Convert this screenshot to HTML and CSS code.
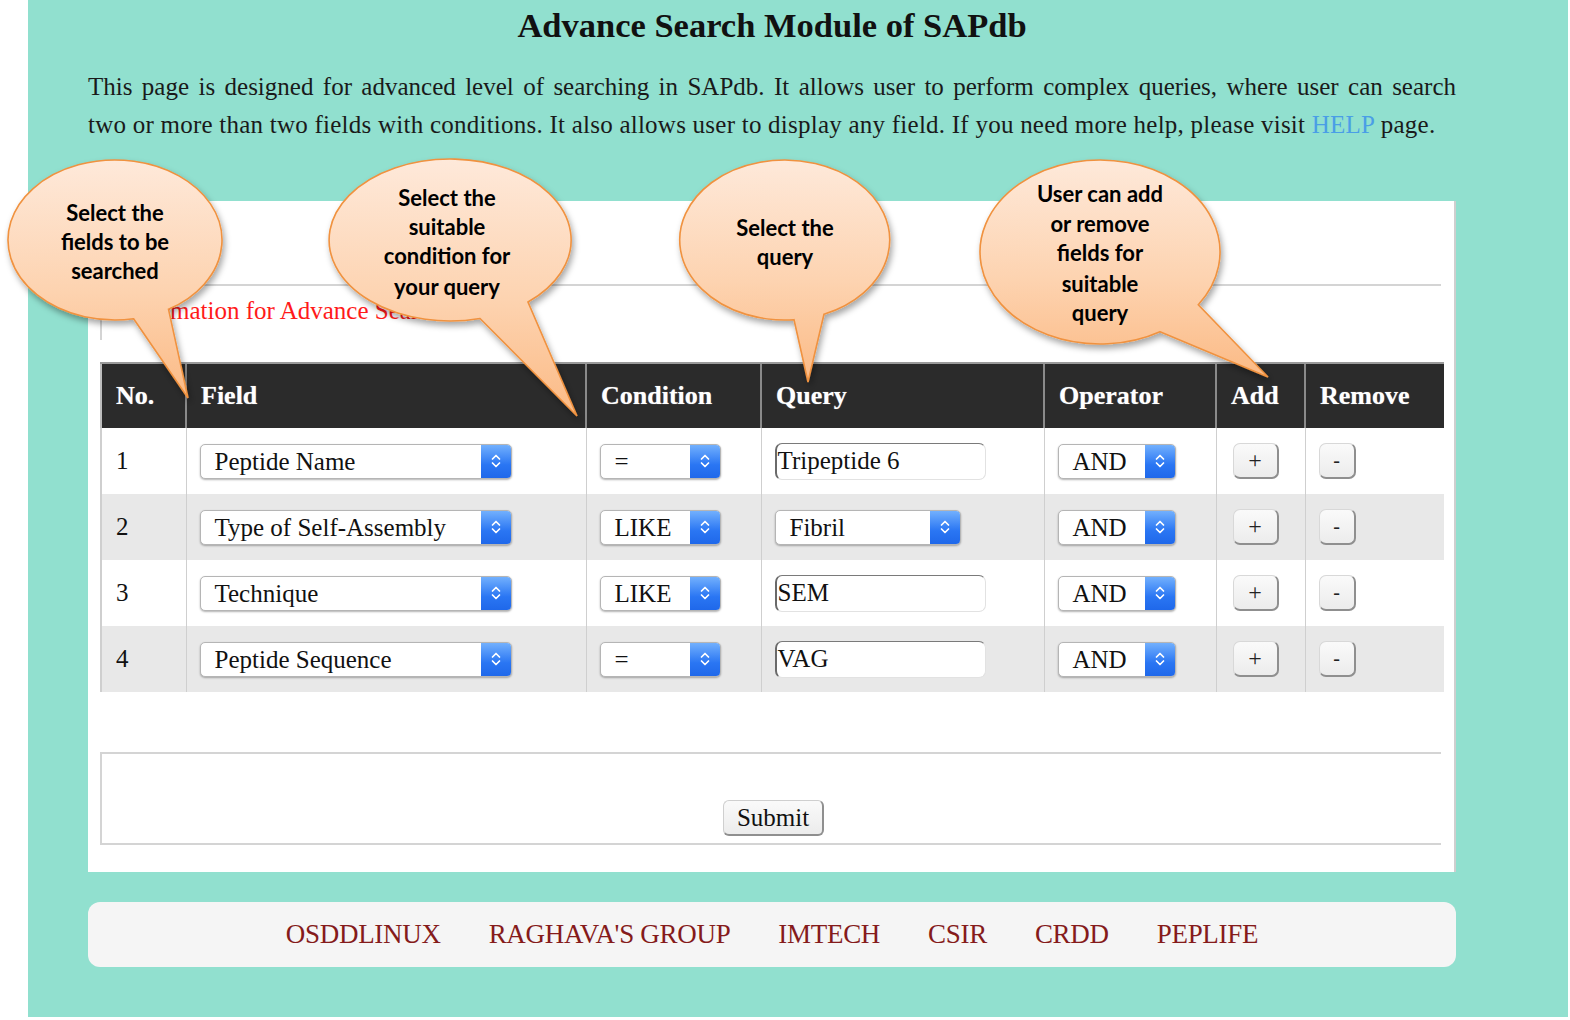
FILE: index.html
```html
<!DOCTYPE html>
<html>
<head>
<meta charset="utf-8">
<title>Advance Search Module of SAPdb</title>
<link rel="stylesheet" href="styles.css">
</head>
<body>
<div class="page">
  <div class="content">
    <h1 class="title">Advance Search Module of SAPdb</h1>
    <div class="intro">
      <div class="line1">This page is designed for advanced level of searching in SAPdb. It allows user to perform complex queries, where user can search</div>
      <div class="line2">two or more than two fields with conditions. It also allows user to display any field. If you need more help, please visit <a class="help" href="#">HELP</a> page.</div>
    </div>

    <div class="panel">
      <div class="legend-box"><span class="legend">Information for Advance Search</span></div>
      <table class="grid">
        <thead>
          <tr>
            <th class="c-no">No.</th>
            <th class="c-field">Field</th>
            <th class="c-cond">Condition</th>
            <th class="c-query">Query</th>
            <th class="c-op">Operator</th>
            <th class="c-add">Add</th>
            <th class="c-rem">Remove</th>
          </tr>
        </thead>
        <tbody>
          <tr>
            <td class="num">1</td>
            <td><div class="sel w-field"><span class="val">Peptide Name</span><i class="arr"><svg viewBox="0 0 12 22" width="12" height="22"><path d="M2.5 9 L6 5.5 L9.5 9 M2.5 13 L6 16.5 L9.5 13"/></svg></i></div></td>
            <td><div class="sel w-cond"><span class="val">=</span><i class="arr"><svg viewBox="0 0 12 22" width="12" height="22"><path d="M2.5 9 L6 5.5 L9.5 9 M2.5 13 L6 16.5 L9.5 13"/></svg></i></div></td>
            <td><div class="inp">Tripeptide 6</div></td>
            <td><div class="sel w-op"><span class="val">AND</span><i class="arr"><svg viewBox="0 0 12 22" width="12" height="22"><path d="M2.5 9 L6 5.5 L9.5 9 M2.5 13 L6 16.5 L9.5 13"/></svg></i></div></td>
            <td><div class="btn add">+</div></td>
            <td><div class="btn rem">-</div></td>
          </tr>
          <tr class="alt">
            <td class="num">2</td>
            <td><div class="sel w-field"><span class="val">Type of Self-Assembly</span><i class="arr"><svg viewBox="0 0 12 22" width="12" height="22"><path d="M2.5 9 L6 5.5 L9.5 9 M2.5 13 L6 16.5 L9.5 13"/></svg></i></div></td>
            <td><div class="sel w-cond"><span class="val">LIKE</span><i class="arr"><svg viewBox="0 0 12 22" width="12" height="22"><path d="M2.5 9 L6 5.5 L9.5 9 M2.5 13 L6 16.5 L9.5 13"/></svg></i></div></td>
            <td><div class="sel w-query"><span class="val">Fibril</span><i class="arr"><svg viewBox="0 0 12 22" width="12" height="22"><path d="M2.5 9 L6 5.5 L9.5 9 M2.5 13 L6 16.5 L9.5 13"/></svg></i></div></td>
            <td><div class="sel w-op"><span class="val">AND</span><i class="arr"><svg viewBox="0 0 12 22" width="12" height="22"><path d="M2.5 9 L6 5.5 L9.5 9 M2.5 13 L6 16.5 L9.5 13"/></svg></i></div></td>
            <td><div class="btn add">+</div></td>
            <td><div class="btn rem">-</div></td>
          </tr>
          <tr>
            <td class="num">3</td>
            <td><div class="sel w-field"><span class="val">Technique</span><i class="arr"><svg viewBox="0 0 12 22" width="12" height="22"><path d="M2.5 9 L6 5.5 L9.5 9 M2.5 13 L6 16.5 L9.5 13"/></svg></i></div></td>
            <td><div class="sel w-cond"><span class="val">LIKE</span><i class="arr"><svg viewBox="0 0 12 22" width="12" height="22"><path d="M2.5 9 L6 5.5 L9.5 9 M2.5 13 L6 16.5 L9.5 13"/></svg></i></div></td>
            <td><div class="inp">SEM</div></td>
            <td><div class="sel w-op"><span class="val">AND</span><i class="arr"><svg viewBox="0 0 12 22" width="12" height="22"><path d="M2.5 9 L6 5.5 L9.5 9 M2.5 13 L6 16.5 L9.5 13"/></svg></i></div></td>
            <td><div class="btn add">+</div></td>
            <td><div class="btn rem">-</div></td>
          </tr>
          <tr class="alt">
            <td class="num">4</td>
            <td><div class="sel w-field"><span class="val">Peptide Sequence</span><i class="arr"><svg viewBox="0 0 12 22" width="12" height="22"><path d="M2.5 9 L6 5.5 L9.5 9 M2.5 13 L6 16.5 L9.5 13"/></svg></i></div></td>
            <td><div class="sel w-cond"><span class="val">=</span><i class="arr"><svg viewBox="0 0 12 22" width="12" height="22"><path d="M2.5 9 L6 5.5 L9.5 9 M2.5 13 L6 16.5 L9.5 13"/></svg></i></div></td>
            <td><div class="inp">VAG</div></td>
            <td><div class="sel w-op"><span class="val">AND</span><i class="arr"><svg viewBox="0 0 12 22" width="12" height="22"><path d="M2.5 9 L6 5.5 L9.5 9 M2.5 13 L6 16.5 L9.5 13"/></svg></i></div></td>
            <td><div class="btn add">+</div></td>
            <td><div class="btn rem">-</div></td>
          </tr>
        </tbody>
      </table>
      <div class="submit-box"><button class="submit" type="button">Submit</button></div>
    </div>

    <div class="footer">
      <a href="#">OSDDLINUX</a>
      <a href="#">RAGHAVA'S GROUP</a>
      <a href="#">IMTECH</a>
      <a href="#">CSIR</a>
      <a href="#">CRDD</a>
      <a href="#">PEPLIFE</a>
    </div>
  </div>
</div>

<svg class="callouts" width="1570" height="1020" viewBox="0 0 1570 1020">
  <defs>
    <linearGradient id="peach" x1="0" y1="0" x2="0" y2="1">
      <stop offset="0" stop-color="#fee9da"/>
      <stop offset="0.55" stop-color="#fdd3b0"/>
      <stop offset="1" stop-color="#fbba85"/>
    </linearGradient>
    <filter id="shadow" x="-20%" y="-20%" width="140%" height="150%">
      <feDropShadow dx="2" dy="4" stdDeviation="3" flood-color="#000" flood-opacity="0.35"/>
    </filter>
  </defs>
  <g class="bubble">
    <path d="M133.6 318.8 L188 398 L168.5 309.3 A107 80 0 1 0 133.6 318.8 Z"/>
    <text x="115" y="221">Select the</text>
    <text x="115" y="250">fields to be</text>
    <text x="115" y="279">searched</text>
  </g>
  <g class="bubble">
    <path d="M480 318.5 L577 416 L528 302 A121 81 0 1 0 480 318.5 Z"/>
    <text x="447" y="206">Select the</text>
    <text x="447" y="235">suitable</text>
    <text x="447" y="264">condition for</text>
    <text x="447" y="295">your query</text>
  </g>
  <g class="bubble">
    <path d="M794 319.7 L808 382 L824 314.2 A105 80 0 1 0 794 319.7 Z"/>
    <text x="785" y="236">Select the</text>
    <text x="785" y="265">query</text>
  </g>
  <g class="bubble">
    <path d="M1160 331.7 L1268 377 L1198.3 304.8 A120 92 0 1 0 1160 331.7 Z"/>
    <text x="1100" y="202">User can add</text>
    <text x="1100" y="232">or remove</text>
    <text x="1100" y="261">fields for</text>
    <text x="1100" y="292">suitable</text>
    <text x="1100" y="321">query</text>
  </g>
</svg>
</body>
</html>
```

FILE: styles.css
```css
html, body {
  margin: 0;
  padding: 0;
  background: #ffffff;
}

body {
  position: relative;
  width: 1570px;
  height: 1020px;
  overflow: hidden;
  font-family: "Liberation Serif", "Times New Roman", serif;
  color: #111;
}

.page {
  margin-left: 28px;
  width: 1540px;
  height: 1017px;
  background: #91e0cf;
  padding-top: 5px;
  box-sizing: border-box;
}

.content {
  margin-left: 60px;
  width: 1368px;
}

.title {
  margin: 0;
  text-align: center;
  font-size: 34.5px;
  line-height: 40px;
  font-weight: bold;
  color: #111;
}

.intro {
  margin-top: 23px;
  font-size: 25px;
  line-height: 38px;
  color: #1a1a1a;
}

.line1 {
  text-align: justify;
  text-align-last: justify;
  white-space: nowrap;
}

.line2 {
  white-space: nowrap;
  letter-spacing: 0.24px;
}

.help {
  color: #4a9ee6;
  text-decoration: none;
}

.panel {
  margin-top: 57px;
  background: #fff;
  border-right: 2px solid #cfcfcf;
  padding: 83px 13px 27px 12px;
  height: 671px;
  box-sizing: border-box;
}

.legend-box {
  height: 56px;
  border-top: 2px solid #d4d4d4;
  border-left: 2px solid #d4d4d4;
  box-sizing: border-box;
  padding-left: 18px;
  padding-top: 8px;
}

.legend {
  color: #ff1a1a;
  font-size: 25px;
  line-height: 34px;
}

.grid {
  margin-top: 22px;
  width: 1343px;
  border-collapse: collapse;
  table-layout: fixed;
  font-size: 25px;
}

.grid th {
  height: 65px;
  background: #2b2b2b;
  color: #fff;
  font-weight: bold;
  font-size: 26px;
  text-align: left;
  padding: 0 0 0 14px;
  border-left: 2px solid #8a8a8a;
  border-top: 2px solid #9a9a9a;
  text-shadow: 0 0 1px rgba(255,255,255,0.6);
  box-sizing: border-box;
}

.grid th:first-child {
  border-left: 2px solid #bdbdbd;
}

.c-no { width: 85px; }
.c-field { width: 400px; }
.c-cond { width: 175px; }
.c-query { width: 283px; }
.c-op { width: 172px; }
.c-add { width: 89px; }
.c-rem { width: 139px; }

.grid td {
  height: 66px;
  padding: 0 0 0 13px;
  border-left: 1px solid #cfcfcf;
  vertical-align: middle;
  box-sizing: border-box;
}

.grid td:first-child {
  border-left: 2px solid #cfcfcf;
}

.grid tr.alt td {
  background: #e8e8e8;
}

.grid td.num {
  padding-left: 14px;
  font-size: 25px;
}

.sel {
  display: flex;
  height: 35px;
  border: 1px solid #b5b5b5;
  border-radius: 5px;
  background: #fff;
  box-shadow: 0 1px 2px rgba(0,0,0,0.3);
  overflow: hidden;
  box-sizing: border-box;
}

.sel .val {
  flex: 1;
  padding-left: 14px;
  font-size: 25px;
  line-height: 33px;
  white-space: nowrap;
  overflow: hidden;
  color: #111;
}

.sel .arr {
  width: 30px;
  background: linear-gradient(#72b0fd, #2a76f3 60%, #1f68ea);
  display: flex;
  align-items: center;
  justify-content: center;
}

.sel .arr path {
  fill: none;
  stroke: #fff;
  stroke-width: 1.7;
  stroke-linecap: round;
  stroke-linejoin: round;
}

.w-field { width: 312px; }
.w-cond { width: 121px; }
.w-query { width: 186px; }
.w-op { width: 118px; }

.inp {
  width: 211px;
  height: 37px;
  box-sizing: border-box;
  border: 1px solid #e2e2e2;
  border-top-color: #7a7a7a;
  border-left: 2px solid #6a6a6a;
  border-radius: 7px;
  background: #fff;
  font-size: 25px;
  line-height: 34px;
  padding-left: 1px;
  color: #111;
}

.btn {
  height: 36px;
  box-sizing: border-box;
  background: linear-gradient(#fafafa, #ececec);
  border: 1px solid #d8d8d8;
  border-right: 2px solid #8f8f8f;
  border-bottom: 2px solid #8f8f8f;
  border-radius: 7px;
  text-align: center;
  font-size: 24px;
  line-height: 32px;
  color: #222;
}

.btn.add {
  width: 46px;
  margin-left: 3px;
}

.btn.rem {
  width: 37px;
  font-size: 20px;
}

.submit-box {
  margin-top: 60px;
  height: 93px;
  border-top: 2px solid #d4d4d4;
  border-left: 2px solid #d4d4d4;
  border-bottom: 2px solid #d4d4d4;
  box-sizing: border-box;
  text-align: center;
  padding-top: 46px;
}

.submit {
  height: 36px;
  padding: 0 13px;
  margin-left: 4px;
  font-family: "Liberation Serif", "Times New Roman", serif;
  font-size: 25px;
  line-height: 32px;
  background: linear-gradient(#fafafa, #ececec);
  border: 1px solid #cfcfcf;
  border-right: 2px solid #8f8f8f;
  border-bottom: 2px solid #8f8f8f;
  border-radius: 6px;
  color: #111;
}

.footer {
  margin-top: 30px;
  height: 65px;
  background: #f5f5f5;
  border-radius: 12px;
  display: flex;
  align-items: center;
  justify-content: center;
  gap: 48px;
  box-sizing: border-box;
}

.footer a {
  color: #851b1b;
  text-decoration: none;
  font-size: 27px;
  letter-spacing: -0.3px;
}

.callouts {
  position: absolute;
  left: 0;
  top: 0;
  pointer-events: none;
}

.bubble path {
  fill: url(#peach);
  stroke: #f0923f;
  stroke-width: 1.6;
  filter: url(#shadow);
}

.bubble text {
  font-family: Lato, "Open Sans", sans-serif;
  font-weight: 700;
  font-size: 22px;
  fill: #000;
  text-anchor: middle;
}
```
